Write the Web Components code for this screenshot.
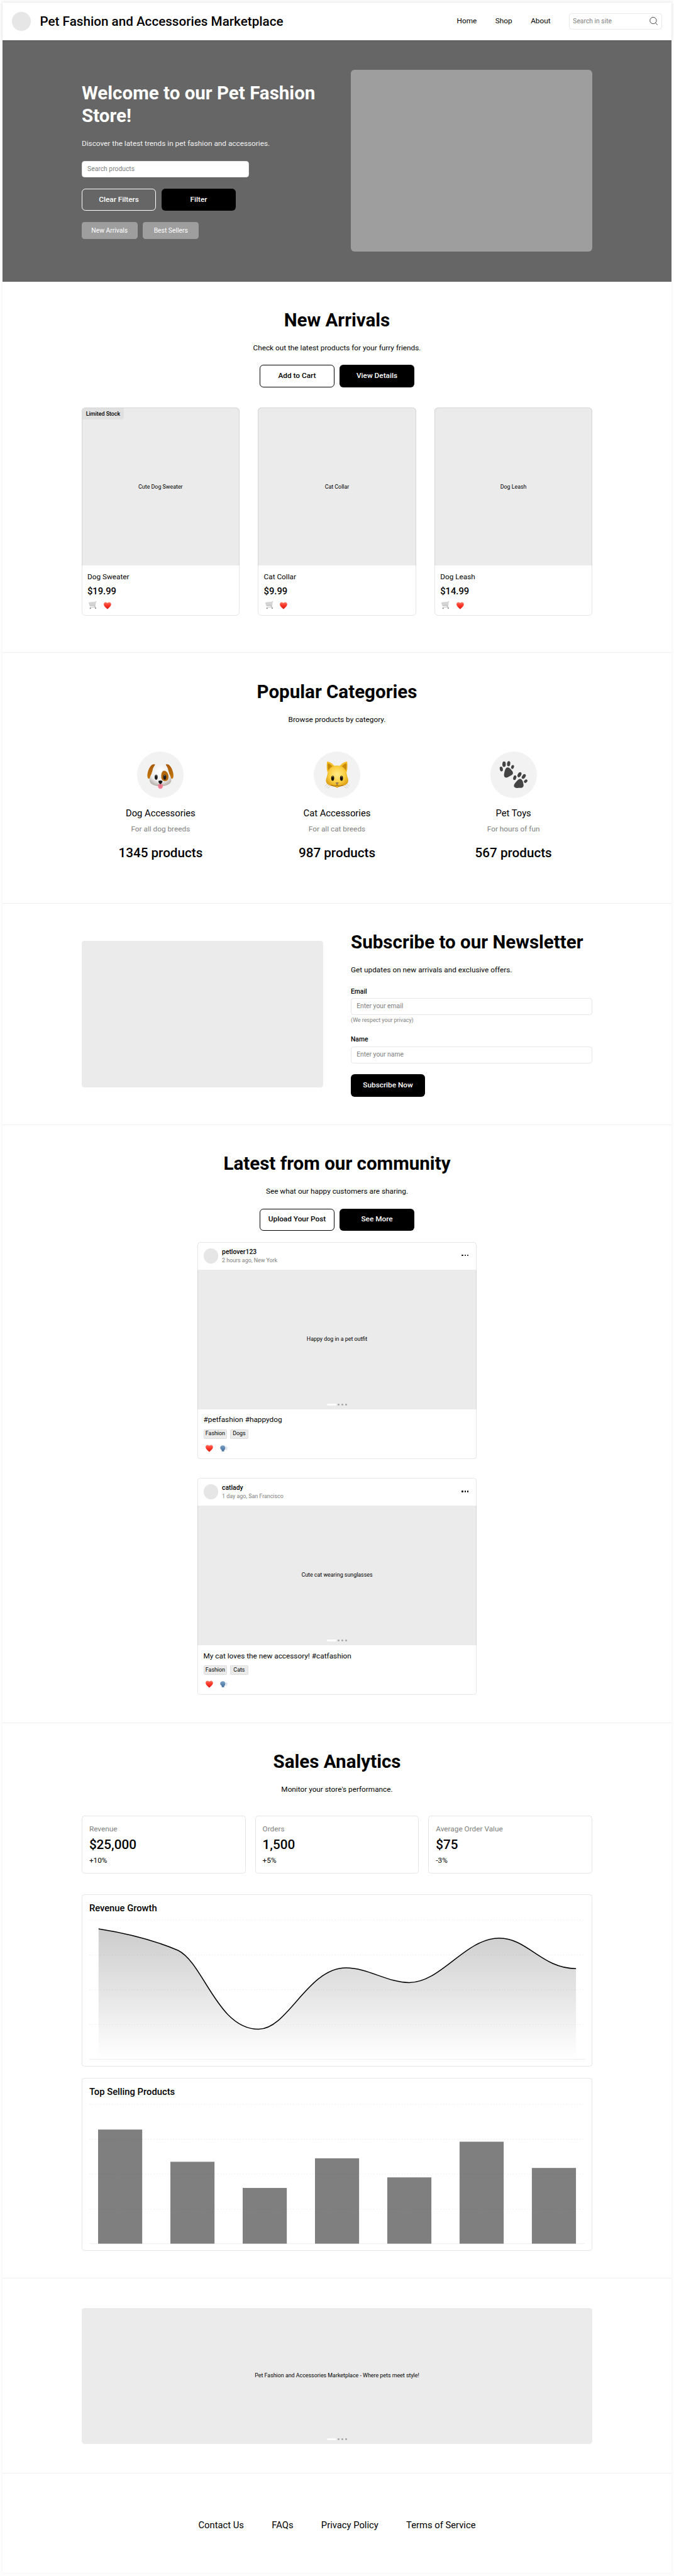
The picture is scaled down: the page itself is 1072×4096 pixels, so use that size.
<!DOCTYPE html>
<html lang="en">
<head>
<meta charset="utf-8">
<title>Pet Fashion and Accessories Marketplace</title>
<style>
  html, body { margin: 0; background: #fdfdfd; }
  body { font-family: Roboto, "Liberation Sans", sans-serif; color: #000; }
</style>
</head>
<body>
<pf-page>
  <pf-header>
    Pet Fashion and Accessories Marketplace
    <a slot="nav">Home</a><a slot="nav">Shop</a><a slot="nav">About</a>
    <span slot="search">Search in site</span>
  </pf-header>

  <pf-hero>
    <span slot="title">Welcome to our Pet Fashion Store!</span>
    <span slot="text">Discover the latest trends in pet fashion and accessories.</span>
    <pf-input slot="search">Search products</pf-input>
    <pf-button slot="actions" kind="ghost">Clear Filters</pf-button>
    <pf-button slot="actions">Filter</pf-button>
    <pf-chip slot="chips">New Arrivals</pf-chip>
    <pf-chip slot="chips">Best Sellers</pf-chip>
  </pf-hero>

  <pf-section style="height:800px">
    <span slot="title">New Arrivals</span>
    <span slot="text">Check out the latest products for your furry friends.</span>
    <pf-button slot="actions" kind="outline">Add to Cart</pf-button>
    <pf-button slot="actions">View Details</pf-button>
    <pf-row style="--gap:40px;margin-top:44px">
      <product-card><pf-badge slot="badge">Limited Stock</pf-badge><span slot="caption">Cute Dog Sweater</span>Dog Sweater<span slot="price">$19.99</span></product-card>
      <product-card><span slot="caption">Cat Collar</span>Cat Collar<span slot="price">$9.99</span></product-card>
      <product-card><span slot="caption">Dog Leash</span>Dog Leash<span slot="price">$14.99</span></product-card>
    </pf-row>
  </pf-section>

  <pf-section style="height:540px">
    <span slot="title">Popular Categories</span>
    <span slot="text">Browse products by category.</span>
    <pf-row style="--gap:40px;margin-top:56px">
      <category-card><pf-icon slot="icon" name="dog" size="60"></pf-icon>Dog Accessories<span slot="note">For all dog breeds</span><span slot="count">1345 products</span></category-card>
      <category-card><pf-icon slot="icon" name="cat" size="60"></pf-icon>Cat Accessories<span slot="note">For all cat breeds</span><span slot="count">987 products</span></category-card>
      <category-card><pf-icon slot="icon" name="paws" size="64"></pf-icon>Pet Toys<span slot="note">For hours of fun</span><span slot="count">567 products</span></category-card>
    </pf-row>
  </pf-section>

  <pf-newsletter>
    <span slot="title">Subscribe to our Newsletter</span>
    <span slot="text">Get updates on new arrivals and exclusive offers.</span>
    <pf-field>Email<pf-input slot="input">Enter your email</pf-input><span slot="hint">(We respect your privacy)</span></pf-field>
    <pf-field>Name<pf-input slot="input">Enter your name</pf-input></pf-field>
    <pf-button>Subscribe Now</pf-button>
  </pf-newsletter>

  <pf-section style="height:1288px">
    <span slot="title">Latest from our community</span>
    <span slot="text">See what our happy customers are sharing.</span>
    <pf-button slot="actions" kind="outline">Upload Your Post</pf-button>
    <pf-button slot="actions">See More</pf-button>
    <post-card style="margin-top:24px">
      <span slot="user">petlover123</span><span slot="meta">2 hours ago, New York</span><span slot="caption">Happy dog in a pet outfit</span>
      #petfashion #happydog
      <pf-tag slot="tags" style="width:51px">Fashion</pf-tag><pf-tag slot="tags" style="width:40px">Dogs</pf-tag>
    </post-card>
    <post-card style="margin-top:40px">
      <span slot="user">catlady</span><span slot="meta">1 day ago, San Francisco</span><span slot="caption">Cute cat wearing sunglasses</span>
      My cat loves the new accessory! #catfashion
      <pf-tag slot="tags" style="width:51px">Fashion</pf-tag><pf-tag slot="tags" style="width:40px">Cats</pf-tag>
    </post-card>
  </pf-section>

  <pf-section style="height:1196px">
    <span slot="title">Sales Analytics</span>
    <span slot="text">Monitor your store's performance.</span>
    <pf-row style="--gap:20px;margin-top:44px">
      <stat-card><span slot="label">Revenue</span>$25,000<span slot="delta">+10%</span></stat-card>
      <stat-card><span slot="label">Orders</span>1,500<span slot="delta">+5%</span></stat-card>
      <stat-card><span slot="label">Average Order Value</span>$75<span slot="delta">-3%</span></stat-card>
    </pf-row>
    <chart-card kind="area" style="margin-top:44px">Revenue Growth</chart-card>
    <chart-card kind="bars" style="margin-top:24px">Top Selling Products</chart-card>
  </pf-section>

  <pf-banner>Pet Fashion and Accessories Marketplace - Where pets meet style!</pf-banner>

  <pf-footer><a>Contact Us</a><a>FAQs</a><a>Privacy Policy</a><a>Terms of Service</a></pf-footer>
</pf-page>

<script>
const define = (name, css, html) => {
  const template = document.createElement('template');
  template.innerHTML = `<style>*{box-sizing:border-box}:host{box-sizing:border-box}${css}</style>${html}`;
  customElements.define(name, class extends HTMLElement {
    constructor() {
      super();
      this.attachShadow({ mode: 'open' }).append(template.content.cloneNode(true));
    }
  });
};

const SECTION = `border-bottom:1.36px solid #f0f0f0;`;
const H2 = `margin:0;font-size:40px;line-height:48px;font-weight:700;`;
const LEAD = `margin:24px 0 0;font-size:16px;line-height:24px;`;

const ICONS = {
  search: ['0 0 18 18', `<circle cx="8" cy="7.6" r="7" fill="none" stroke="#444" stroke-width="1.3"/><path d="M13 12.8L17 17" stroke="#444" stroke-width="1.3" stroke-linecap="round"/>`],
  heart: ['0 0 16 16', `<defs><linearGradient id="h" x1="0" y1="0" x2="0" y2="1"><stop offset="0" stop-color="#ff6a58"/><stop offset=".5" stop-color="#fb3527"/><stop offset="1" stop-color="#d91a12"/></linearGradient></defs><path d="M8 15.7C5.5 13 0.1 9.6 0.1 5 0.1 2.3 2 .6 4.2.6 6 .6 7.3 1.6 8 3 8.700 1.600 10 .6 11.800.6 14 .6 15.900 2.300 15.900 5 15.900 9.600 10.500 13 8 15.700Z" fill="url(#h)"/><path d="M2 3.200Q3.800 1.300 6 2.600M10 2.600Q12.200 1.300 14 3.200" fill="none" stroke="#ff9a8c" stroke-width=".8"/>`],
  cart: ['0 0 17 17', `<g fill="none" stroke="#a0a0a0"><path d="M.6 2.700L2.900 10.300 13.600 9.800 15.400.5" fill="#ececec" stroke-width=".7"/><path d="M.6 2.700L14.700 1.700M1.300 4.700L14.500 4M2 6.700L14.200 6.200M2.500 8.500L13.800 8M3.500 2.600L5.200 10M6.300 2.400L7.300 10M9 2.200L9.400 10M11.800 2L11.500 10" stroke-width=".4"/><path d="M15.300.7L16.600.4M13.600 9.800L14.800 12.400 2.600 13.700M12 10L14 13.500" stroke-width=".8"/></g><circle cx="3.600" cy="15.200" r="1.300" fill="#777"/><circle cx="14.900" cy="14.800" r="1.300" fill="#777"/>`],
  speak: ['0 0 16 16', `<defs><linearGradient id="s" x1="0" y1="0" x2="0" y2="1"><stop offset="0" stop-color="#7fa3c8"/><stop offset="1" stop-color="#3f6d9c"/></linearGradient></defs><path d="M5.800 1.600C8.800 1.400 10.600 3 10.800 5.200L11.700 7.600 10.900 8.200 10.900 10.200C10.800 11.300 9.800 11.400 8.800 11.400L8.900 14.500H3.700L3.600 11.800C1.500 10.300.1 8.800.3 6.200.5 3.300 2.800 1.700 5.800 1.600Z" fill="url(#s)"/><path d="M12.100 6L14 4.600M12.400 8H15.600M12.100 9.900L14 11.500M15 5.500V6.300M15 10.300V11" stroke="#8ba9c6" stroke-width="1" fill="none"/>`],
  dog: ['0 0 60 60', `<defs><radialGradient id="f" cx=".5" cy=".35" r=".65"><stop offset="0" stop-color="#fff"/><stop offset=".7" stop-color="#ececec"/><stop offset="1" stop-color="#bcb6b0"/></radialGradient><linearGradient id="e" x1="0" x2="0" y1="0" y2="1"><stop offset="0" stop-color="#a85a08"/><stop offset="1" stop-color="#c5770f"/></linearGradient></defs><path d="M18.500 7.500C10 4.500 4 17 2.300 27 1.200 34 2.500 38.500 5 38.300 9 38 11 31 11.500 25Z M41.500 7.500C50 4.500 56 17 57.700 27 58.800 34 57.500 38.500 55 38.300 51 38 49 31 48.500 25Z" fill="url(#e)"/><path d="M30 5C39 5 46 10.500 47 21 47.500 27 53.500 33 53.500 40.500 53.500 49 45 54 30 54 15 54 6.500 49 6.500 40.500 6.500 33 12.500 27 13 21 14 10.500 21 5 30 5Z" fill="url(#f)"/><path d="M38 21C43 20.500 48 28 47.500 35 47 42.500 42 44 38 43 33 41.500 31.500 37 31.800 32 32 26 34 21.500 38 21Z" fill="#b4680d"/><ellipse cx="20.800" cy="35" rx="3.200" ry="5.500" fill="#1c1c1c"/><ellipse cx="39.300" cy="35" rx="3.200" ry="5.500" fill="#1c1c1c"/><circle cx="20.800" cy="31.500" r="1.100" fill="#aaa"/><circle cx="39.300" cy="31.500" r="1.100" fill="#aaa"/><path d="M20 53Q27 53 30 48 33 53 40 53" fill="none" stroke="#aaa" stroke-width=".8"/><path d="M25 51C26 49.500 34 49.500 35 51 36 56 34 60 30 60 26 60 24 56 25 51Z" fill="#ef7f95"/><path d="M30 51.500V56.500" stroke="#cf5c74" stroke-width="1"/><path d="M26 43C28 41.800 32 41.800 34 43 35 46 32 48.500 30 50 28 48.500 25 46 26 43Z" fill="#151515"/>`],
  cat: ['0 0 60 60', `<defs><radialGradient id="c" cx=".5" cy=".4" r=".62"><stop offset="0" stop-color="#ffe988"/><stop offset=".55" stop-color="#fbd043"/><stop offset="1" stop-color="#d9980c"/></radialGradient></defs><path d="M8.500 1.500C7.300 7 7.300 17 9 24L26 13C21 6 13 .5 8.500 1.500ZM51.500 1.500C52.700 7 52.700 17 51 24L34 13C39 6 47 .5 51.500 1.500Z" fill="#f4bd2a"/><path d="M10 5C9 11 9.500 17 11.500 21L20.500 12.500C17 8.500 13 5.500 10 5ZM50 5C51 11 50.500 17 48.500 21L39.500 12.500C43 8.500 47 5.500 50 5Z" fill="#c78a0b"/><path d="M30 10C42 9.500 50 18 51 29 51.500 34 54.500 38 54 43.500 53 51.500 44 54 36 54.500L30 58 24 54.500C16 54 7 51.500 6 43.500 5.500 38 8.500 34 9 29 10 18 18 9.500 30 10Z" fill="url(#c)"/><ellipse cx="20.500" cy="37.200" rx="3.200" ry="5.400" fill="#171208"/><ellipse cx="39.500" cy="37.200" rx="3.200" ry="5.400" fill="#171208"/><circle cx="20.500" cy="33.700" r="1" fill="#d8c98d"/><circle cx="39.500" cy="33.700" r="1" fill="#d8c98d"/><path d="M26.500 46.500Q30 45 33.500 46.500 33 49.500 30 51.500 27 49.500 26.500 46.500Z" fill="#9b8053"/><path d="M17 52Q27 57 30 51.500 33 57 43 52" fill="none" stroke="#a66d07" stroke-width="1.600"/><path d="M13 51L6 58M17 53L9.500 59M10 49L3.500 54M47 51L54 58M43 53L50.500 59M50 49L56.500 54" stroke="#aaa08c" stroke-width=".6"/>`],
  paws: ['0 0 60 60', `<defs><g id="p"><path d="M0-8.500C5-8 8-2.500 10-.5 12.500 3 11.500 7 7 9 3.500 10.500.5 14-4 13.500-8.500 13-8.500 8-7.500 3.500-6.500-1-5-9 0-8.500Z"/><ellipse cx="-14" cy="-5" rx="3.300" ry="5.200" transform="rotate(-12 -14 -5)"/><ellipse cx="-8" cy="-15.500" rx="3.700" ry="6"/><ellipse cx="2" cy="-16.500" rx="3.500" ry="5.600" transform="rotate(8 2 -16.500)"/><ellipse cx="10.500" cy="-9.500" rx="3" ry="4.300" transform="rotate(18 10.500 -9.500)"/></g></defs><g fill="#444"><use href="#p" transform="translate(18.500 23.500) scale(.93)"/><use href="#p" transform="translate(42 46.500) rotate(28) scale(.93)"/></g>`],
};

/* Icon drawn from the table above, scaled to its size attribute. */
customElements.define('pf-icon', class extends HTMLElement {
  connectedCallback() {
    if (this.shadowRoot) return;
    const [box, body] = ICONS[this.getAttribute('name')];
    const size = this.getAttribute('size') || 16;
    this.attachShadow({ mode: 'open' }).innerHTML =
      `<style>:host{display:block;flex:none;width:${size}px;height:${size}px}svg{display:block;width:100%;height:100%;overflow:visible}</style><svg viewBox="${box}">${body}</svg>`;
  }
});

define('pf-page', `
  :host{display:block;zoom:.7385;width:1451.6px;padding:6px 6px 6px}
  main{width:1439.6px;height:5534px;background:#fff;box-shadow:0 0 5px rgba(0,0,0,.05)}`,
  `<main><slot></slot></main>`);

define('pf-header', `
  :host{display:block;position:relative;z-index:1;box-shadow:0 0 7px rgba(0,0,0,.1);background:#fff}
  header{display:flex;align-items:center;height:80px;padding:0 20px}
  .logo{width:40px;height:40px;border-radius:50%;background:#e6e6e6}
  h1{margin:0 auto 0 20px;font-size:28px;line-height:36px;font-weight:500;white-space:nowrap}
  nav{display:flex;gap:40px;font-size:16px;line-height:24px;font-weight:400}
  .search{display:flex;align-items:center;justify-content:space-between;width:200px;height:36px;margin-left:40px;padding:0 7px;border:1.36px solid #e8e8e8;border-radius:6px;font-size:14px;color:#808080}`,
  `<header><div class="logo"></div><h1><slot></slot></h1><nav><slot name="nav"></slot></nav><div class="search"><slot name="search"></slot><pf-icon name="search" size="18"></pf-icon></div></header>`);

define('pf-button', `
  :host{display:flex;align-items:center;justify-content:center;width:160px;height:48px;border-radius:8px;background:#000;color:#fff;font-size:16px;font-weight:500;line-height:24px;white-space:nowrap}
  :host([kind]){background:none;border:1.36px solid currentColor}
  :host([kind=outline]){color:#000}`, `<slot></slot>`);

define('pf-input', `
  :host{display:flex;align-items:center;height:36px;padding:0 11px;border:1.36px solid #e6e6e6;border-radius:6px;background:#fff;color:#808080;font-size:14px}`, `<slot></slot>`);

define('pf-chip', `
  :host{display:flex;align-items:center;justify-content:center;width:120px;height:36px;border-radius:6px;background:#9e9e9e;color:#fff;font-size:14px}`, `<slot></slot>`);

define('pf-hero', `
  :host{display:block}
  section{display:flex;align-items:center;justify-content:space-between;height:520px;padding:0 170px;background:#666;color:#fff}
  .copy{width:520px}
  h2{${H2}} p{${LEAD}color:#f2f2f2}
  ::slotted(pf-input){width:360px;margin-top:24px}
  .row{display:flex;gap:12px;margin-top:24px}
  .image{width:520px;height:392px;border-radius:8px;background:#9e9e9e}`,
  `<section><div class="copy"><h2><slot name="title"></slot></h2><p><slot name="text"></slot></p><slot name="search"></slot><div class="row"><slot name="actions"></slot></div><div class="row"><slot name="chips"></slot></div></div><div class="image"></div></section>`);

define('pf-section', `
  :host{display:flex;flex-direction:column;align-items:center;padding-top:60px;${SECTION}}
  h2{${H2}} p{${LEAD}}
  .row{display:flex;gap:12px}
  ::slotted(pf-button){margin-top:24px}`,
  `<h2><slot name="title"></slot></h2><p><slot name="text"></slot></p><div class="row"><slot name="actions"></slot></div><slot></slot>`);

define('pf-row', `
  :host{display:flex;gap:var(--gap);width:1100px}
  ::slotted(*){flex:1 1 0;min-width:0}`, `<slot></slot>`);

define('pf-badge', `
  :host{display:flex;align-items:center;height:24px;padding:0 8px;border-radius:7px 0 6px 0;background:#e0e0e0;font-size:12px;font-weight:500}`, `<slot></slot>`);

define('product-card', `
  :host{display:block;position:relative;height:448px;border:1.36px solid #e6e6e6;border-radius:8px}
  .image{display:flex;align-items:center;justify-content:center;height:340px;margin:-1.36px -1.36px 0;border:1.36px solid #d4d4d4;border-bottom:0;border-radius:8px 8px 0 0;background:#ebebeb;font-size:12px}
  .badge{position:absolute;left:0;top:0}
  .body{padding:13px 11px 0}
  .name{font-size:16px;line-height:24px}
  .price{margin-top:4px;font-size:20px;line-height:28px;font-weight:500}
  .icons{display:flex;align-items:center;gap:15px;margin-top:8px;padding-left:3px}`,
  `<div class="image"><slot name="caption"></slot></div><div class="badge"><slot name="badge"></slot></div><div class="body"><div class="name"><slot></slot></div><div class="price"><slot name="price"></slot></div><div class="icons"><pf-icon name="cart" size="17"></pf-icon><pf-icon name="heart" size="16"></pf-icon></div></div>`);

define('category-card', `
  :host{display:flex;flex-direction:column;align-items:center}
  .disc{display:flex;align-items:center;justify-content:center;width:100px;height:100px;border-radius:50%;background:#f2f2f2}
  .name{margin-top:20px;font-size:20px;line-height:28px}
  .note{margin-top:8px;font-size:16px;line-height:24px;color:#808080}
  .count{margin-top:20px;font-size:28px;line-height:36px;font-weight:500}`,
  `<div class="disc"><slot name="icon"></slot></div><div class="name"><slot></slot></div><div class="note"><slot name="note"></slot></div><div class="count"><slot name="count"></slot></div>`);

define('pf-field', `
  :host{display:block;margin-top:24px;font-size:14px;line-height:20px;font-weight:500}
  ::slotted(pf-input){margin-top:4px;font-weight:400}
  .hint{font-size:12px;line-height:16px;font-weight:400;color:#808080}
  ::slotted([slot=hint]){display:block;padding-top:4px}`,
  `<slot></slot><slot name="input"></slot><div class="hint"><slot name="hint"></slot></div>`);

define('pf-newsletter', `
  :host{display:flex;align-items:center;justify-content:space-between;height:476px;padding:0 170px;${SECTION}}
  .image{width:520px;height:316px;border-radius:6px;background:#ebebeb}
  .form{width:520px}
  h2{${H2}} p{${LEAD}}
  ::slotted(pf-button){margin-top:24px}`,
  `<div class="image"></div><div class="form"><h2><slot name="title"></slot></h2><p><slot name="text"></slot></p><slot></slot></div>`);

define('pf-dots', `
  :host{display:flex;gap:4px}
  i{width:4px;height:4px;border-radius:2px;background:#a6a6a6}
  .current{width:20px;background:#fff}`, `<i class="current"></i><i></i><i></i><i></i>`);

define('pf-tag', `
  :host{display:flex;align-items:center;justify-content:center;height:20px;border:1.36px solid #dedede;border-radius:2px;background:#ebebeb;font-size:12px;line-height:16px}`, `<slot></slot>`);

define('post-card', `
  :host{display:block;width:600px;height:468px;border:1.36px solid #e6e6e6;border-radius:6px}
  header{display:flex;align-items:center;height:60px;margin-top:-1.36px;padding:0 15px 0 11px}
  .avatar{width:32px;height:32px;border-radius:50%;background:#e6e6e6}
  .who{margin:0 auto 0 8px}
  .user{font-size:14px;line-height:20px;font-weight:500}
  .meta{font-size:12px;line-height:14px;color:#808080}
  .more{display:flex;gap:2px;padding-bottom:2px}
  .more i{width:3.700px;height:3.700px;border-radius:50%;background:#000}
  .image{display:grid;grid-template-rows:1fr auto 1fr;justify-items:center;height:300px;margin:0 -1.36px;border:solid #d4d4d4;border-width:0 1.36px;background:#ebebeb;font-size:12px;line-height:16px}
  .image span{grid-row:2}
  .image pf-dots{grid-row:3;align-self:end;margin-bottom:8px}
  .body{padding:12px 11px}
  .text{font-size:16px;line-height:24px}
  .tags{display:flex;gap:6px;margin-top:8px}
  .icons{display:flex;align-items:center;gap:16px;margin-top:12px;padding-left:4px}`,
  `<header><div class="avatar"></div><div class="who"><div class="user"><slot name="user"></slot></div><div class="meta"><slot name="meta"></slot></div></div><div class="more"><i></i><i></i><i></i></div></header>
   <div class="image"><span><slot name="caption"></slot></span><pf-dots></pf-dots></div>
   <div class="body"><div class="text"><slot></slot></div><div class="tags"><slot name="tags"></slot></div><div class="icons"><pf-icon name="heart" size="16"></pf-icon><pf-icon name="speak" size="16"></pf-icon></div></div>`);

define('stat-card', `
  :host{display:block;height:124px;padding:15px;border:1.36px solid #e6e6e6;border-radius:6px}
  .label,.delta{font-size:16px;line-height:24px}
  .label{color:#808080}
  .value{margin:4px 0;font-size:28px;line-height:36px;font-weight:500}`,
  `<div class="label"><slot name="label"></slot></div><div class="value"><slot></slot></div><div class="delta"><slot name="delta"></slot></div>`);

/* Chart card: kind="area" or kind="bars", plotted on a 1068 x 300 grid. */
customElements.define('chart-card', class extends HTMLElement {
  connectedCallback() {
    if (this.shadowRoot) return;
    const curve = 'M20 19C77 28 134 41 191.300 65.300C247 93 276 235 364.700 235C428 235 470 103 553 103C600 103 643 134.600 689 134.600C758 134.600 810 39 883 39C944 39 975 104.500 1048.300 104.500';
    const bars = [54.3, 123.7, 180, 116.2, 157.3, 80.5, 137];
    const grid = [0, 75, 150, 225].map(y => `<path d="M0 ${y}H1068" stroke="#000" stroke-opacity=".06" stroke-width="1.360" stroke-dasharray="3 3"/>`).join('')
      + '<path d="M0 300H1068" stroke="#000" stroke-opacity=".05" stroke-width="2"/>';
    const data = this.getAttribute('kind') === 'area'
      ? `<defs><linearGradient id="g" gradientUnits="userSpaceOnUse" x1="0" y1="19" x2="0" y2="300"><stop offset="0" stop-opacity=".2"/><stop offset="1" stop-opacity="0"/></linearGradient></defs><path d="${curve}V300H20Z" fill="url(#g)"/><path d="${curve}" fill="none" stroke="#000" stroke-width="2"/>`
      : bars.map((y, i) => `<rect x="${19 + i * 155.700}" y="${y}" width="95" height="${300 - y}" fill-opacity=".5"/>`).join('');
    this.attachShadow({ mode: 'open' }).innerHTML = `
      <style>
        :host{display:block;box-sizing:border-box;width:1100px;height:372px;padding:15px;border:1.36px solid #e6e6e6;border-radius:6px}
        h3{margin:0 0 12px;font-size:20px;line-height:28px;font-weight:500}
        svg{display:block;width:1068px;height:300px;overflow:visible}
      </style>
      <h3><slot></slot></h3><svg viewBox="0 0 1068 300">${grid}${data}</svg>`;
  }
});

define('pf-banner', `
  :host{display:block;height:420px;padding:64px 170px;${SECTION}}
  .image{display:grid;grid-template-rows:1fr auto 1fr;justify-items:center;height:292px;border-radius:6px;background:#ebebeb;font-size:12px;line-height:16px}
  .image span{grid-row:2}
  pf-dots{grid-row:3;align-self:end;margin-bottom:8px}`,
  `<div class="image"><span><slot></slot></span><pf-dots></pf-dots></div>`);

define('pf-footer', `
  :host{display:flex;align-items:center;justify-content:center;gap:60px;height:222px;font-size:20px;line-height:28px}`, `<slot></slot>`);
</script>
</body>
</html>
